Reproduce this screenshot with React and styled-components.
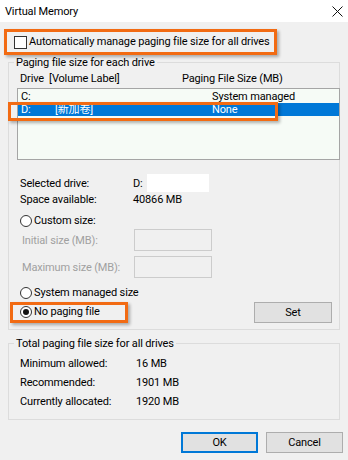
import React from 'react';
import styled, { createGlobalStyle } from 'styled-components';

const FONT = 'Roboto, "Noto Sans CJK SC", sans-serif';
const ORANGE = '#f26b13';

const GlobalStyle = createGlobalStyle`
  html, body {
    margin: 0;
    padding: 0;
    background: #f0f0f0;
  }
  body {
    font-family: ${FONT};
    font-size: 11px;
    letter-spacing: -0.15px;
    color: #000;
  }
`;

const drives = [
  { letter: 'C:', label: '', size: 'System managed', selected: false },
  { letter: 'D:', label: '[新加卷]', size: 'None', selected: true },
];

const totals = [
  { label: 'Minimum allowed:', value: '16 MB' },
  { label: 'Recommended:', value: '1901 MB' },
  { label: 'Currently allocated:', value: '1920 MB' },
];

const CloseIcon = () => (
  <svg width="11" height="11" viewBox="0 0 11 11">
    <path d="M0.5 0.5 L10.5 10.5 M10.5 0.5 L0.5 10.5" stroke="#111" strokeWidth="1" fill="none" />
  </svg>
);

const Radio = ({ checked }) => (
  <RadioCircle>{checked && <RadioDot />}</RadioCircle>
);

const App = () => (
  <Window>
    <GlobalStyle />
    <TitleBar>
      <Title>Virtual Memory</Title>
      <CloseButton>
        <CloseIcon />
      </CloseButton>
    </TitleBar>

    <Body>
      <AutoHighlight>
        <CheckBox />
        <Label>Automatically manage paging file size for all drives</Label>
      </AutoHighlight>

      <Group $height={275}>
        <Legend>Paging file size for each drive</Legend>
        <GroupInner>
          <Headers>
            <HeaderDrive>Drive&nbsp;&nbsp;[Volume Label]</HeaderDrive>
            <span>Paging File Size (MB)</span>
          </Headers>

          <ListBox>
            {drives.map(d => (
              <DriveRow key={d.letter} $selected={d.selected}>
                <DriveLetter>{d.letter}</DriveLetter>
                <DriveLabel>{d.label}</DriveLabel>
                <span>{d.size}</span>
                {d.selected && <RowHighlight />}
              </DriveRow>
            ))}
          </ListBox>

          <Info>
            <InfoRow>
              <InfoLabel>Selected drive:</InfoLabel>
              <span>D:</span>
              <Redacted />
            </InfoRow>
            <InfoRow>
              <InfoLabel>Space available:</InfoLabel>
              <span>40866 MB</span>
            </InfoRow>
          </Info>

          <RadioRow $top={6}>
            <Radio />
            <Label>Custom size:</Label>
          </RadioRow>

          <SizeRow $top={0}>
            <SizeLabel>Initial size (MB):</SizeLabel>
            <SizeInput />
          </SizeRow>
          <SizeRow $top={5}>
            <SizeLabel>Maximum size (MB):</SizeLabel>
            <SizeInput />
          </SizeRow>

          <RadioRow $top={7}>
            <Radio />
            <Label>System managed size</Label>
          </RadioRow>

          <BottomRow>
            <NoPagingHighlight>
              <Radio checked />
              <Label>No paging file</Label>
            </NoPagingHighlight>
            <Button $width={78}>Set</Button>
          </BottomRow>
        </GroupInner>
      </Group>

      <Group $height={84} $top={6}>
        <Legend>Total paging file size for all drives</Legend>
        <TotalsInner>
          {totals.map(t => (
            <TotalRow key={t.label}>
              <TotalLabel>{t.label}</TotalLabel>
              <span>{t.value}</span>
            </TotalRow>
          ))}
        </TotalsInner>
      </Group>

      <Footer>
        <Button $width={77} $primary>OK</Button>
        <Button $width={77}>Cancel</Button>
      </Footer>
    </Body>
  </Window>
);

const Window = styled.div`
  width: 348px;
  height: 460px;
  background: #f0f0f0;
  display: flex;
  flex-direction: column;
  overflow: hidden;
`;

const TitleBar = styled.div`
  height: 22px;
  background: #fff;
  display: flex;
  align-items: center;
  justify-content: space-between;
  padding: 1px 5px 0 5px;
  box-sizing: border-box;
`;

const Title = styled.span`
  font-size: 11px;
  line-height: 16px;
`;

const CloseButton = styled.span`
  display: flex;
`;

const Body = styled.div`
  padding: 0 8px;
  display: flex;
  flex-direction: column;
`;

const AutoHighlight = styled.div`
  margin: 7px 0 0 -4px;
  width: 273px;
  height: 26px;
  box-sizing: border-box;
  border: 3px solid ${ORANGE};
  box-shadow: 2px 2px 3px rgba(0, 0, 0, 0.3);
  display: flex;
  align-items: center;
  padding-left: 7px;
`;

const CheckBox = styled.span`
  width: 13px;
  height: 13px;
  box-sizing: border-box;
  border: 1px solid #333;
  background: #fff;
  flex-shrink: 0;
`;

const Label = styled.span`
  margin-left: 2px;
  line-height: 16px;
  white-space: nowrap;
`;

const Group = styled.fieldset`
  margin: ${p => p.$top || 0}px 0 0 0;
  padding: 0;
  height: ${p => p.$height}px;
  box-sizing: border-box;
  border: 1px solid #dcdcdc;
  min-width: 0;
`;

const Legend = styled.legend`
  margin-left: 5px;
  padding: 0 2px;
  line-height: 15px;
`;

const GroupInner = styled.div`
  padding: 0 0 0 8px;
  display: flex;
  flex-direction: column;
`;

const Headers = styled.div`
  display: flex;
  margin-top: 2px;
  padding-left: 3px;
  line-height: 14px;
  white-space: nowrap;
`;

const HeaderDrive = styled.span`
  width: 162px;
`;

const ListBox = styled.div`
  margin-top: 2px;
  margin-right: -1px;
  height: 72px;
  box-sizing: border-box;
  border: 1px solid #a5a5a5;
  background: #f6fbf6;
  padding-top: 1px;
`;

const DriveRow = styled.div`
  position: relative;
  height: 13px;
  line-height: 13px;
  display: flex;
  padding-left: 3px;
  background: ${p => (p.$selected ? '#0078d7' : 'transparent')};
  color: ${p => (p.$selected ? '#fff' : '#000')};
`;

const DriveLetter = styled.span`
  width: 34px;
`;

const DriveLabel = styled.span`
  width: 157px;
`;

const RowHighlight = styled.span`
  position: absolute;
  left: -10px;
  top: -1px;
  width: 270px;
  height: 19px;
  box-sizing: border-box;
  border: 3px solid ${ORANGE};
  box-shadow: 2px 2px 3px rgba(0, 0, 0, 0.3);
`;

const Info = styled.div`
  margin-top: 15px;
  padding-left: 3px;
`;

const InfoRow = styled.div`
  display: flex;
  align-items: center;
  height: 16px;
`;

const InfoLabel = styled.span`
  width: 113px;
`;

const Redacted = styled.span`
  width: 62px;
  height: 18px;
  background: #fff;
  margin-left: 4px;
`;

const RadioRow = styled.div`
  display: flex;
  align-items: center;
  height: 16px;
  margin-top: ${p => p.$top}px;
  padding-left: 3px;
`;

const RadioCircle = styled.span`
  width: 12px;
  height: 12px;
  box-sizing: border-box;
  border-radius: 50%;
  border: 1px solid #333;
  background: #fff;
  display: flex;
  align-items: center;
  justify-content: center;
  flex-shrink: 0;
`;

const RadioDot = styled.span`
  width: 6px;
  height: 6px;
  border-radius: 50%;
  background: #111;
`;

const SizeRow = styled.div`
  display: flex;
  align-items: center;
  height: 22px;
  margin-top: ${p => p.$top}px;
  padding-left: 5px;
`;

const SizeLabel = styled.span`
  width: 112px;
  color: #a0a0a0;
  white-space: nowrap;
`;

const SizeInput = styled.span`
  width: 78px;
  height: 22px;
  box-sizing: border-box;
  border: 1px solid #cccccc;
  background: #f0f0f0;
`;

const BottomRow = styled.div`
  display: flex;
  align-items: center;
  justify-content: space-between;
  height: 22px;
  padding-right: 7px;
`;

const NoPagingHighlight = styled.div`
  margin-left: -7px;
  width: 118px;
  height: 21px;
  box-sizing: border-box;
  border: 3px solid ${ORANGE};
  box-shadow: 2px 2px 3px rgba(0, 0, 0, 0.3);
  display: flex;
  align-items: center;
  padding-left: 7px;
`;

const Button = styled.div`
  width: ${p => p.$width}px;
  height: 21px;
  box-sizing: border-box;
  border: 1px solid ${p => (p.$primary ? '#0078d7' : '#adadad')};
  box-shadow: ${p => (p.$primary ? 'inset 0 0 0 1px #0078d7' : 'none')};
  background: #e1e1e1;
  display: flex;
  align-items: center;
  justify-content: center;
`;

const TotalsInner = styled.div`
  padding: 3px 0 0 11px;
`;

const TotalRow = styled.div`
  display: flex;
  align-items: center;
  height: 19px;
`;

const TotalLabel = styled.span`
  width: 116px;
`;

const Footer = styled.div`
  display: flex;
  justify-content: flex-end;
  gap: 8px;
  margin: 12px -3px 0 0;
`;

export default App;
